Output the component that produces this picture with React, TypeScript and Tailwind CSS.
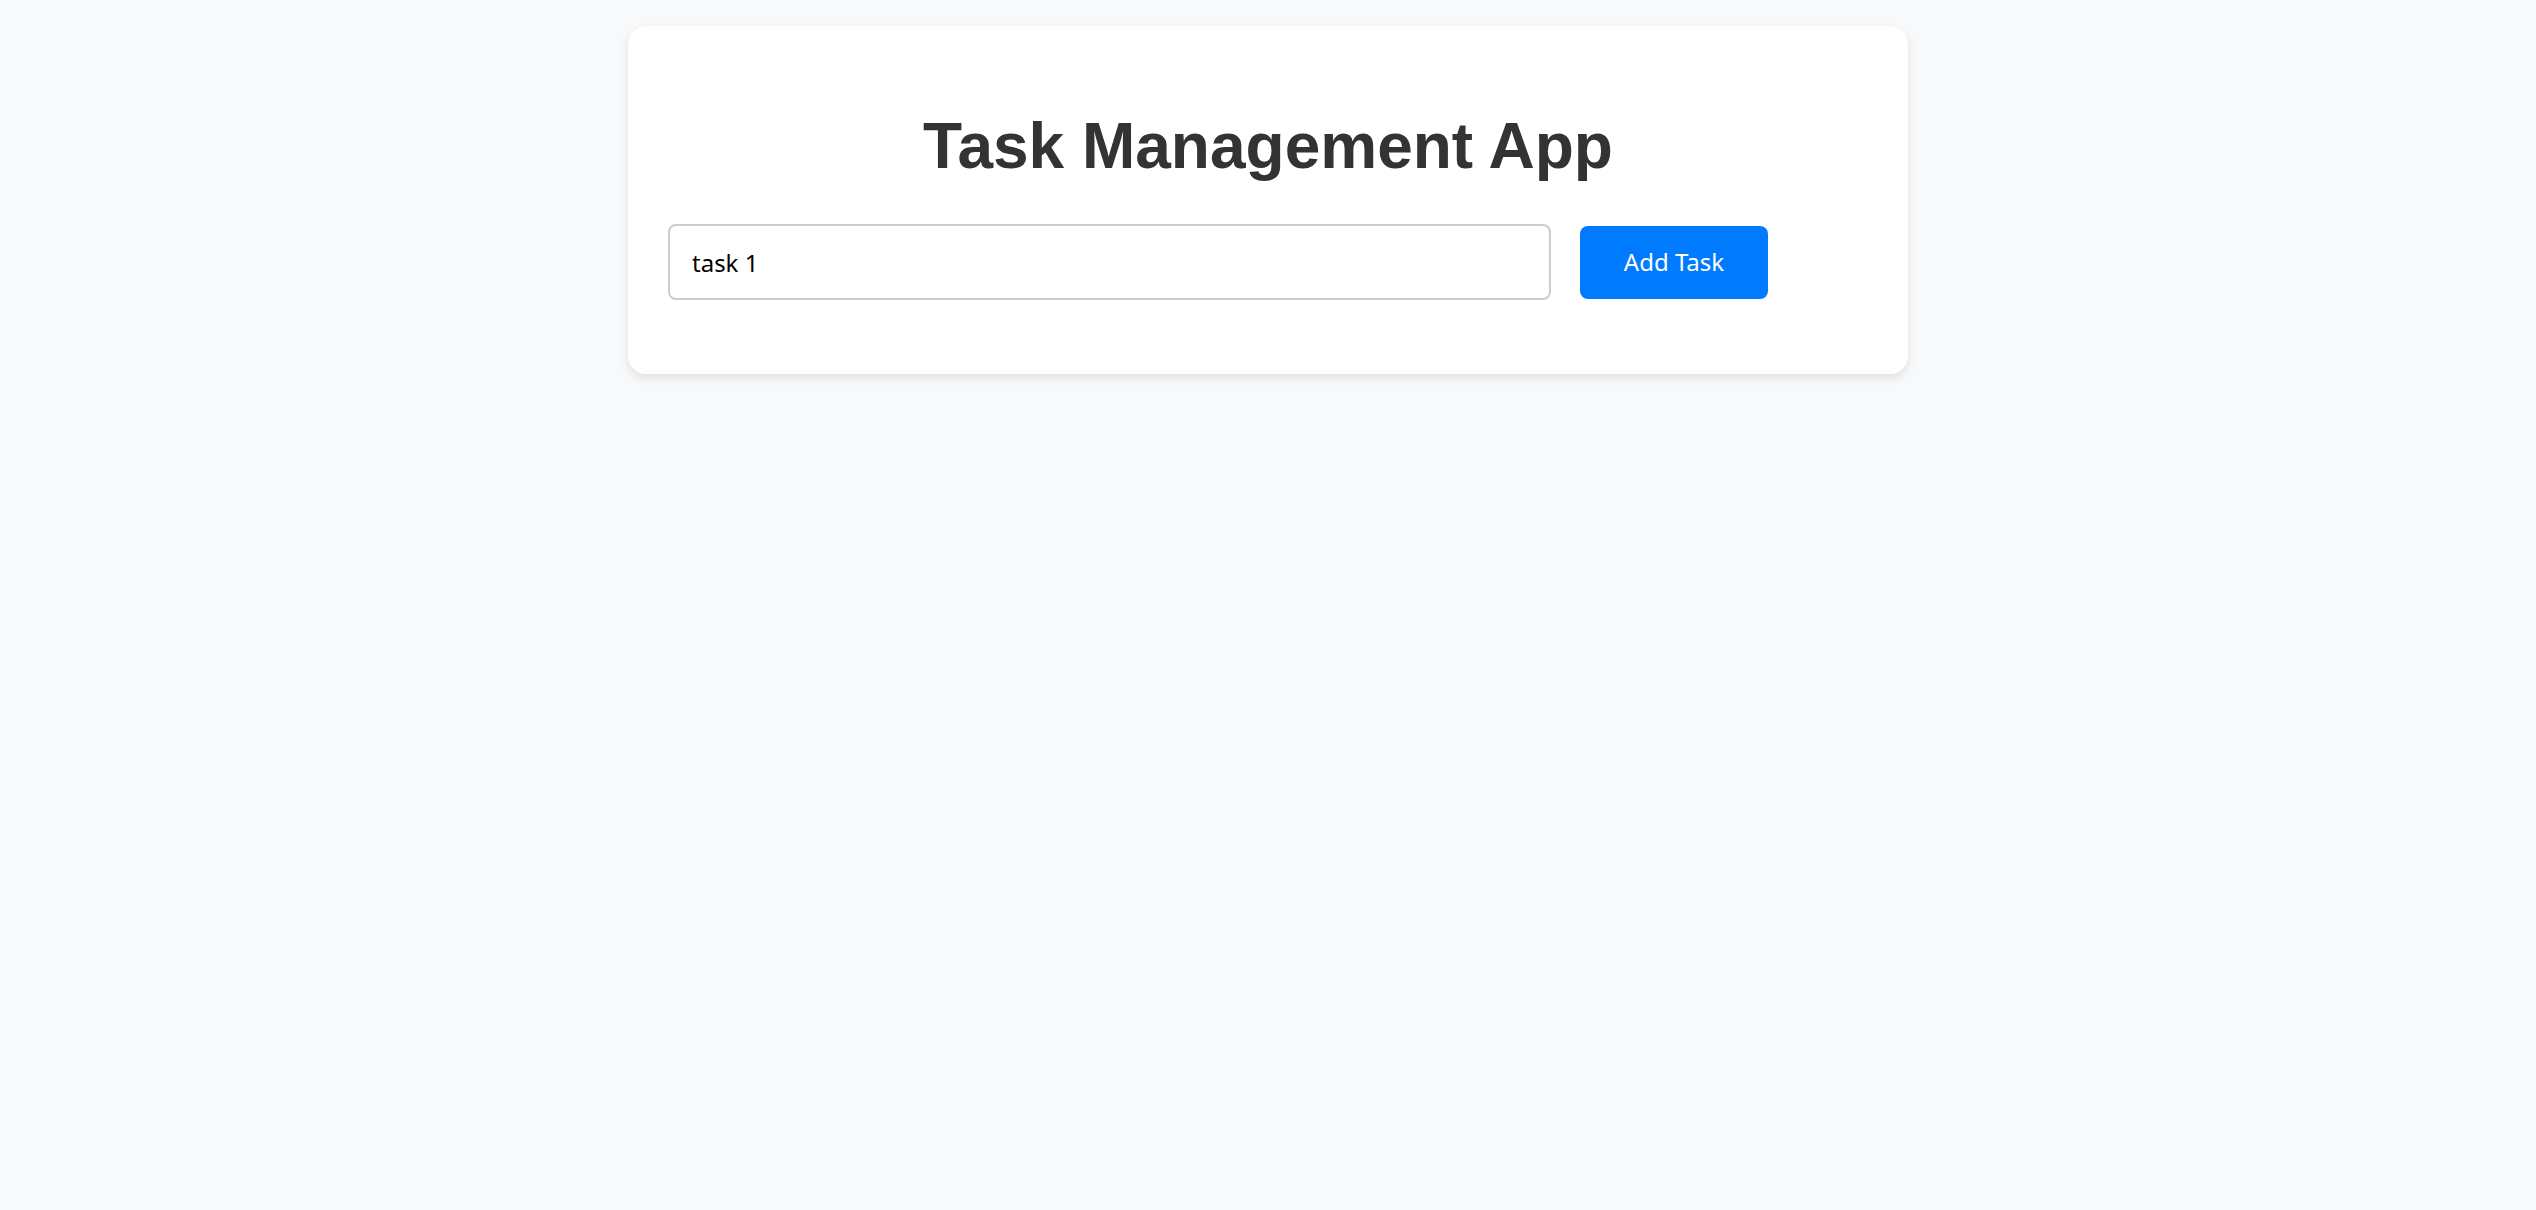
import { useState } from "react";

const App = () => {
  const [task, setTask] = useState("task 1");

  return (
    <div className="min-h-screen bg-[#f8f9fa] pt-[26px] font-['Liberation_Sans',Arial,sans-serif]">
      <div className="mx-auto w-[1280px] rounded-[18px] bg-white px-10 pt-[83px] pb-[74px] shadow-[0_4px_10px_rgba(0,0,0,0.1)]">
        <h1 className="text-center text-[64px] leading-[74px] font-bold text-[#333]">
          Task Management App
        </h1>
        <div className="mt-[41px] flex items-center gap-[29px]">
          <input
            type="text"
            value={task}
            onChange={(e) => setTask(e.target.value)}
            className="h-[76px] w-[883px] rounded-[8px] border-2 border-[#ccc] px-[22px] font-['Noto_Sans',sans-serif] text-[24px] text-black outline-none"
          />
          <button className="h-[73px] w-[188px] rounded-[8px] bg-[#007bff] font-['Noto_Sans',sans-serif] text-[24px] text-white">
            Add Task
          </button>
        </div>
      </div>
    </div>
  );
};

export default App;
